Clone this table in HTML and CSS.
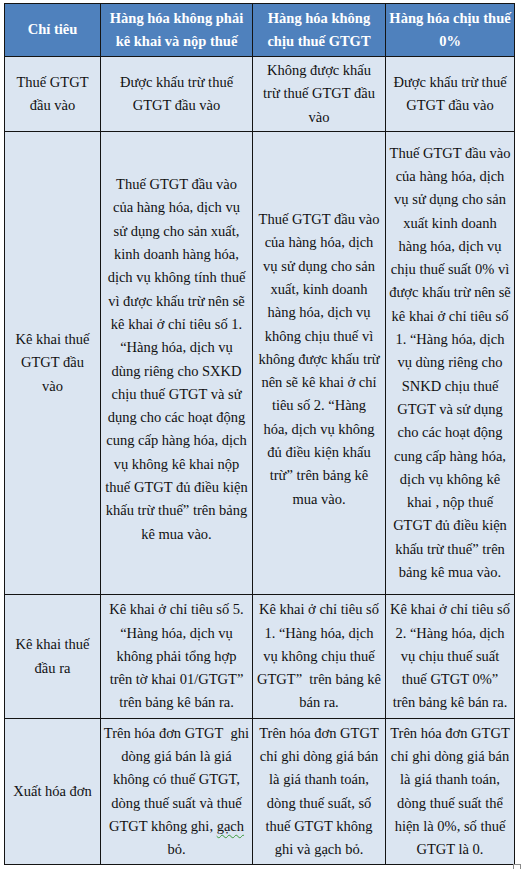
FILE: index.html
```html
<!DOCTYPE html>
<html lang="vi">
<head>
<meta charset="utf-8">
<title>Bảng so sánh</title>
<link rel="stylesheet" href="styles.css">
</head>
<body>
<div class="page">
<table class="tax">
  <colgroup>
    <col class="c1"><col class="c2"><col class="c3"><col class="c4">
  </colgroup>
  <thead>
    <tr class="r0">
      <th>Chỉ tiêu</th>
      <th>Hàng hóa không phải<br>kê khai và nộp thuế</th>
      <th>Hàng hóa không<br>chịu thuế GTGT</th>
      <th>Hàng hóa chịu thuế<br>0%</th>
    </tr>
  </thead>
  <tbody>
    <tr class="r1">
      <td>Thuế GTGT<br>đầu vào</td>
      <td>Được khấu trừ thuế<br>GTGT đầu vào</td>
      <td>Không được khấu<br>trừ thuế GTGT đầu<br>vào</td>
      <td>Được khấu trừ thuế<br>GTGT đầu vào</td>
    </tr>
    <tr class="r2">
      <td>Kê khai thuế<br>GTGT đầu<br>vào</td>
      <td class="up">Thuế GTGT đầu vào<br>của hàng hóa, dịch vụ<br>sử dụng cho sản xuất,<br>kinh doanh hàng hóa,<br>dịch vụ không tính thuế<br>vì được khấu trừ nên sẽ<br>kê khai ở chỉ tiêu số 1.<br>“Hàng hóa, dịch vụ<br>dùng riêng cho SXKD<br>chịu thuế GTGT và sử<br>dụng cho các hoạt động<br>cung cấp hàng hóa, dịch<br>vụ không kê khai nộp<br>thuế GTGT đủ điều kiện<br>khấu trừ thuế” trên bảng<br>kê mua vào.</td>
      <td class="up">Thuế GTGT đầu vào<br>của hàng hóa, dịch<br>vụ sử dụng cho sản<br>xuất, kinh doanh<br>hàng hóa, dịch vụ<br>không chịu thuế vì<br>không được khấu trừ<br>nên sẽ kê khai ở chỉ<br>tiêu số 2. “Hàng<br>hóa, dịch vụ không<br>đủ điều kiện khấu<br>trừ” trên bảng kê<br>mua vào.</td>
      <td>Thuế GTGT đầu vào<br>của hàng hóa, dịch<br>vụ sử dụng cho sản<br>xuất kinh doanh<br>hàng hóa, dịch vụ<br>chịu thuế suất 0% vì<br>được khấu trừ nên sẽ<br>kê khai ở chỉ tiêu số<br>1. “Hàng hóa, dịch<br>vụ dùng riêng cho<br>SNKD chịu thuế<br>GTGT và sử dụng<br>cho các hoạt động<br>cung cấp hàng hóa,<br>dịch vụ không kê<br>khai , nộp thuế<br>GTGT đủ điều kiện<br>khấu trừ thuế” trên<br>bảng kê mua vào.</td>
    </tr>
    <tr class="r3">
      <td>Kê khai thuế<br>đầu ra</td>
      <td>Kê khai ở chỉ tiêu số 5.<br>“Hàng hóa, dịch vụ<br>không phải tổng hợp<br>trên tờ khai 01/GTGT”<br>trên bảng kê bán ra.</td>
      <td>Kê khai ở chỉ tiêu số<br>1. “Hàng hóa, dịch<br>vụ không chịu thuế<br>GTGT”&nbsp; trên bảng kê<br>bán ra.</td>
      <td>Kê khai ở chỉ tiêu số<br>2. “Hàng hóa, dịch<br>vụ chịu thuế suất<br>thuế GTGT 0%”<br>trên bảng kê bán ra.</td>
    </tr>
    <tr class="r4">
      <td>Xuất hóa đơn</td>
      <td>Trên hóa đơn GTGT&nbsp; ghi<br>dòng giá bán là giá<br>không có thuế GTGT,<br>dòng thuế suất và thuế<br>GTGT không ghi, <span class="spell">gạch</span><br>bỏ.</td>
      <td>Trên hóa đơn GTGT<br>chỉ ghi dòng giá bán<br>là giá thanh toán,<br>dòng thuế suất, số<br>thuế GTGT không<br>ghi và gạch bỏ.</td>
      <td>Trên hóa đơn GTGT<br>chỉ ghi dòng giá bán<br>là giá thanh toán,<br>dòng thuế suất thể<br>hiện là 0%, số thuế<br>GTGT là 0.</td>
    </tr>
  </tbody>
</table>
<span class="handle"></span>
</div>
</body>
</html>
```
FILE: styles.css
```css
html, body {
  margin: 0;
  padding: 0;
  background: #ffffff;
  font-family: "Liberation Serif", "Times New Roman", Tinos, "DejaVu Serif", serif;
}
.page {
  position: relative;
  width: 522px;
  height: 869px;
  padding: 3px 0 0 4px;
  box-sizing: border-box;
}
.tax {
  border-collapse: collapse;
  table-layout: fixed;
  width: 510px;
  font-family: "Liberation Serif", "Times New Roman", Tinos, "DejaVu Serif", serif;
  font-size: 14.5px;
  line-height: 23.3px;
  color: #111111;
}
.c1 { width: 96px; }
.c2 { width: 152px; }
.c3 { width: 133px; }
.c4 { width: 129px; }
.tax th, .tax td {
  border: 1px solid #141414;
  padding: 1px 2px;
  text-align: center;
  vertical-align: middle;
  white-space: nowrap;
  overflow: hidden;
  font-family: "Liberation Serif", "Times New Roman", Tinos, "DejaVu Serif", serif;
}
.tax th {
  background: #4f81bd;
  color: #ffffff;
  font-weight: bold;
}
.tax td {
  background: #dbe5f1;
}
.r0 { height: 53px; }
.r1 { height: 75px; }
.r2 { height: 463px; }
.r3 { height: 124px; }
.r4 { height: 146px; }
.tax td.up {
  padding-bottom: 8px;
}
.spell {
  text-decoration: underline wavy #3a9a3a;
  text-decoration-thickness: 1px;
  text-underline-offset: 3px;
}
.handle {
  position: absolute;
  left: 513px;
  top: 864px;
  width: 6px;
  height: 6px;
  border: 1px solid #8a8a8a;
  background: #ffffff;
}
```
